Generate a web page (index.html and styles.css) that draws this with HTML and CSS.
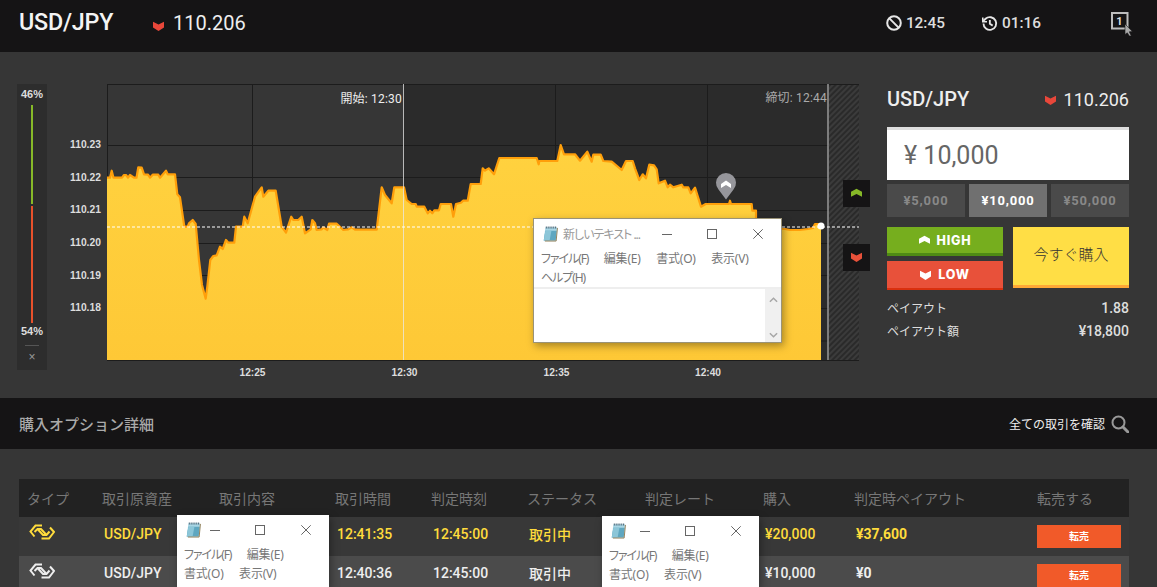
FILE: index.html
```html
<!DOCTYPE html>
<html lang="ja">
<head>
<meta charset="utf-8">
<title>USD/JPY</title>
<link rel="stylesheet" href="styles.css">
</head>
<body>
<svg class="defs" width="0" height="0" aria-hidden="true">
  <defs>
    <symbol id="chev-down" viewBox="0 0 11 10"><path d="M0 .8 L5.5 3.4 L11 .8 V6.6 L5.5 10 L0 6.6Z"/></symbol>
    <symbol id="chev-up" viewBox="0 0 13 10"><path d="M0 3.6 L6.5 0 L13 3.6 V9.4 L6.5 6.2 L0 9.4Z"/></symbol>
    <symbol id="swap" viewBox="0 0 26 16"><g fill="none" stroke-width="2" stroke-linejoin="miter"><path d="M13 1.5 H6.5 L1.5 7.5 L5.5 12.5"/><path d="M5.5 8 L8.5 5 H12 L17.5 11"/><path d="M12.5 14.5 H20 L25 8 L21 3.5"/><path d="M20.5 7.5 L17.5 11 H14 L8.5 5"/></g></symbol>
    <symbol id="notepad" viewBox="0 0 16 17">
      <path d="M2.5 1.5 H15 L13.5 15.5 H0.8Z" fill="#a9d6e5"/>
      <path d="M2.5 5 H14.6 L13.5 15.5 H0.8Z" fill="#5fa7c0"/>
      <path d="M2.5 5 H9 L7 15.5 H0.8Z" fill="#8cc6d8"/>
      <path d="M2 16 H14 L15.4 2" fill="none" stroke="#8c7b52" stroke-width="1"/>
      <path d="M3 1.5 H15" stroke="#39596b" stroke-width="2" stroke-dasharray="1 1" fill="none"/>
    </symbol>
    <symbol id="win-min" viewBox="0 0 10 10"><path d="M0 5.5 H10" stroke="#666" fill="none"/></symbol>
    <symbol id="win-max" viewBox="0 0 10 10"><rect x=".5" y=".5" width="9" height="9" stroke="#666" fill="none"/></symbol>
    <symbol id="win-close" viewBox="0 0 10 10"><path d="M.3 .3 L9.7 9.7 M9.7 .3 L.3 9.7" stroke="#666" fill="none"/></symbol>
    <pattern id="hatch" width="4" height="4" patternUnits="userSpaceOnUse" patternTransform="rotate(45)">
      <rect width="4" height="4" fill="#2a2a2a"/><rect width="2" height="4" fill="#3b3b3b"/>
    </pattern>
    <linearGradient id="area" x1="0" y1="0" x2="0" y2="1"><stop offset="0" stop-color="#ffd23f"/><stop offset="1" stop-color="#fec836"/></linearGradient>
  </defs>
</svg>

<header class="topbar">
  <div class="top-title">USD/JPY</div>
  <svg class="chev top-chev"><use href="#chev-down"/></svg>
  <div class="top-price">110.206</div>
  <div class="clock clock-first">
    <svg class="clock-icon" viewBox="0 0 16 16"><circle cx="8" cy="8" r="6.8"/><path d="M3.4 3.4 L12.6 12.6"/></svg>
    <span>12:45</span>
  </div>
  <div class="clock clock-second">
    <svg class="clock-icon" viewBox="0 0 24 24"><path d="M3.5 12a9 9 0 1 0 3-6.7L3 8.5"/><path d="M2.5 3.5v6h6" class="solid"/><path d="M12.5 7v5.5l4 2.5"/></svg>
    <span>01:16</span>
  </div>
  <svg class="multi" viewBox="0 0 24 26">
    <rect x="3" y="3" width="15.5" height="15.5"/>
    <text x="10.5" y="15" class="multi-num" text-anchor="middle">1</text>
    <path d="M16 14 L23.4 21.5 L20.3 21.8 L22.3 26 L20.3 26 L18.3 22.8 L16 24.5Z" class="multi-cursor"/>
  </svg>
</header>

<section class="main">
  <aside class="gauge">
    <div class="gauge-pct gauge-up">46%</div>
    <div class="gauge-bar gauge-green"></div>
    <div class="gauge-bar gauge-red"></div>
    <div class="gauge-pct gauge-down">54%</div>
    <div class="gauge-rule"></div>
    <div class="gauge-x">×</div>
  </aside>

  <svg class="chart" viewBox="47 84 840 300" width="840" height="300">
    <rect x="107" y="84" width="296" height="276" fill="#363636"/>
    <rect x="403" y="84" width="426" height="276" fill="#2b2b2b"/>
    <rect x="829" y="84" width="30" height="276" fill="url(#hatch)"/>
    <g class="grid">
      <path d="M107 84.5 H859 M107 145.5 H829 M107 177.5 H829 M107 210.5 H829 M107 243.5 H829 M107 275.5 H829 M107 308.5 H829 M107 341 H829 M107 360.5 H859"/>
      <path d="M107.5 84 V360 M252.5 84 V360 M555.5 84 V360 M707.5 84 V360"/>
    </g>
    <path fill="url(#area)" d="M107 360 V177.7 H110 L111.7 170.7 L113.5 177.7 H122 L124 175 H126 L128 177.7 L130 175 L134 177.7 H136.5 L138.3 167.3 L141.7 167.7 L144 174.3 L148 174.7 L150 177.7 L152.7 174.7 H158.3 L160 177.7 L166 170.7 L167.7 174.3 H175 L177.3 194.3 L180 197.3 L184.3 226.7 H187.7 L189 223.3 L192.7 220 L195.7 224 L199 260 L202 285 L205.7 298.7 L207.3 286.7 L210.3 260 L213.3 256 L216.7 255.3 L220 246.7 L222.7 249 L226 240 L228.3 242.7 H234.3 L236 226.7 H242.7 L244.3 216.7 L247.7 223.3 L255 196.7 L261.7 187.3 L263.3 196.7 L268.3 190.7 H275.7 L281.7 226.7 L286 232.7 L291.3 216.7 L293.3 220 H298.3 L301.7 216.7 L305 233.3 L310.7 229.3 L312.3 220 L315 223.3 L316.7 230 L321.7 229.3 L323.3 227.3 L327.3 230 L329 223.7 H336.7 L343.3 230 L348.3 229.3 L351.7 227.3 L355 229.7 H376.7 L381.7 187.3 L385 195 L391.7 203.3 L394.3 187.3 H404 L406.7 200 L411.7 204 H415.7 L416.7 206.7 H424.3 L427.7 213.3 L430 210.7 L432.3 213.3 L434.3 210.3 H439 L440.7 204 H451 L453.3 216.7 L456 204 L461 202.7 L463.3 200.7 H467.7 L470.7 184 H480.7 L482.7 168.3 L485 170.7 L488.7 168.3 L494 174.3 L499.3 158 H536.7 L538.7 164.3 L539.3 161 H557.3 L560.7 145 L564 154.3 H575 L580 160.7 L587.3 151.7 L591.7 161.7 L593.3 154.7 H600.7 L603.3 161 L611.7 161.7 L621.7 170 L626 161 H632.7 L635 168.3 L639.3 180 L642.7 174.3 L646 178.3 L649.3 164.7 L654 165.3 L656.7 169.3 L658.7 183.3 L665 180.7 L667.7 187.3 L670 184.7 L673.3 187.3 L681.7 184.7 L683.3 187.3 H688.3 L690.7 193.3 L695 187.7 L701 206.7 L705.7 204 H729 L730 200.7 L731 204 H751.7 L752.3 210.7 H756 V228 L785 229 L790 230 H800 L808 229 L813 228 L815 224 H818 L821 226 V360Z"/>
    <path class="area-line" d="M107 177.7 H110 L111.7 170.7 L113.5 177.7 H122 L124 175 H126 L128 177.7 L130 175 L134 177.7 H136.5 L138.3 167.3 L141.7 167.7 L144 174.3 L148 174.7 L150 177.7 L152.7 174.7 H158.3 L160 177.7 L166 170.7 L167.7 174.3 H175 L177.3 194.3 L180 197.3 L184.3 226.7 H187.7 L189 223.3 L192.7 220 L195.7 224 L199 260 L202 285 L205.7 298.7 L207.3 286.7 L210.3 260 L213.3 256 L216.7 255.3 L220 246.7 L222.7 249 L226 240 L228.3 242.7 H234.3 L236 226.7 H242.7 L244.3 216.7 L247.7 223.3 L255 196.7 L261.7 187.3 L263.3 196.7 L268.3 190.7 H275.7 L281.7 226.7 L286 232.7 L291.3 216.7 L293.3 220 H298.3 L301.7 216.7 L305 233.3 L310.7 229.3 L312.3 220 L315 223.3 L316.7 230 L321.7 229.3 L323.3 227.3 L327.3 230 L329 223.7 H336.7 L343.3 230 L348.3 229.3 L351.7 227.3 L355 229.7 H376.7 L381.7 187.3 L385 195 L391.7 203.3 L394.3 187.3 H404 L406.7 200 L411.7 204 H415.7 L416.7 206.7 H424.3 L427.7 213.3 L430 210.7 L432.3 213.3 L434.3 210.3 H439 L440.7 204 H451 L453.3 216.7 L456 204 L461 202.7 L463.3 200.7 H467.7 L470.7 184 H480.7 L482.7 168.3 L485 170.7 L488.7 168.3 L494 174.3 L499.3 158 H536.7 L538.7 164.3 L539.3 161 H557.3 L560.7 145 L564 154.3 H575 L580 160.7 L587.3 151.7 L591.7 161.7 L593.3 154.7 H600.7 L603.3 161 L611.7 161.7 L621.7 170 L626 161 H632.7 L635 168.3 L639.3 180 L642.7 174.3 L646 178.3 L649.3 164.7 L654 165.3 L656.7 169.3 L658.7 183.3 L665 180.7 L667.7 187.3 L670 184.7 L673.3 187.3 L681.7 184.7 L683.3 187.3 H688.3 L690.7 193.3 L695 187.7 L701 206.7 L705.7 204 H729 L730 200.7 L731 204 H751.7 L752.3 210.7 H756 V228 L785 229 L790 230 H800 L808 229 L813 228 L815 224 H818 L821 226"/>
    <path class="start-line" d="M403.5 84 V360"/>
    <path class="end-line" d="M828 84 V360"/>
    <path class="strike" d="M107 227 H859"/>
    <circle cx="821" cy="226" r="3.5" fill="#fff"/>
    <path d="M726 199.5 L718.5 189.5 A10 10 0 1 1 733.5 189.5Z" fill="#96969b"/>
    <path d="M721 184 L726 180.5 L731 184 V188 L726 185 L721 188Z" fill="#fff"/>
    <g class="ylabels">
      <text x="70" y="148">110.23</text>
      <text x="70" y="181">110.22</text>
      <text x="70" y="213">110.21</text>
      <text x="70" y="246">110.20</text>
      <text x="70" y="279">110.19</text>
      <text x="70" y="311">110.18</text>
    </g>
    <g class="xlabels">
      <text x="252.5" y="376">12:25</text>
      <text x="404.5" y="376">12:30</text>
      <text x="556.5" y="376">12:35</text>
      <text x="708" y="376">12:40</text>
    </g>
    <text class="mark mark-start" x="402" y="103">開始: 12:30</text>
    <text class="mark mark-end" x="827" y="102">締切: 12:44</text>
    <rect x="843" y="180" width="27" height="27" fill="#151415"/>
    <rect x="843" y="244" width="27" height="27" fill="#151415"/>
    <use href="#chev-up" x="851" y="188" width="11" height="10" fill="#86b928"/>
    <use href="#chev-down" x="851" y="252" width="11" height="10" fill="#e8513a"/>
  </svg>

  <aside class="panel">
    <div class="pair">
      <div class="pair-name">USD/JPY</div>
      <div class="pair-price"><svg class="chev pair-chev"><use href="#chev-down"/></svg>110.206</div>
    </div>
    <div class="amount">¥ 10,000</div>
    <div class="chips">
      <div class="chip">¥5,000</div>
      <div class="chip chip-on">¥10,000</div>
      <div class="chip">¥50,000</div>
    </div>
    <div class="actions">
      <div class="dirs">
        <div class="dir dir-high"><svg class="dir-icon"><use href="#chev-up"/></svg>HIGH</div>
        <div class="dir dir-low"><svg class="dir-icon"><use href="#chev-down"/></svg>LOW</div>
      </div>
      <div class="buy">今すぐ購入</div>
    </div>
    <div class="pay"><span>ペイアウト</span><b>1.88</b></div>
    <div class="pay"><span>ペイアウト額</span><b>¥18,800</b></div>
  </aside>
</section>

<section class="subbar">
  <h2 class="sub-title">購入オプション詳細</h2>
  <div class="sub-link">全ての取引を確認
    <svg class="search" viewBox="0 0 18 18"><circle cx="7.5" cy="7.5" r="6"/><path d="M12 12 L17 17" class="search-h"/></svg>
  </div>
</section>

<section class="tablewrap">
  <div class="row row-head">
    <div>タイプ</div><div>取引原資産</div><div>取引内容</div><div>取引時間</div><div>判定時刻</div><div>ステータス</div><div>判定レート</div><div>購入</div><div>判定時ペイアウト</div><div>転売する</div>
  </div>
  <div class="row row-live">
    <div><svg class="swap"><use href="#swap"/></svg></div><div class="cell-b">USD/JPY</div><div></div><div class="cell">12:41:35</div><div class="cell">12:45:00</div><div class="cell">取引中</div><div></div><div class="cell">¥20,000</div><div class="cell-b pay-cell">¥37,600</div><div class="cell-btn"><span class="resell">転売</span></div>
  </div>
  <div class="row row-alt">
    <div><svg class="swap"><use href="#swap"/></svg></div><div class="cell-b">USD/JPY</div><div></div><div class="cell">12:40:36</div><div class="cell">12:45:00</div><div class="cell">取引中</div><div></div><div class="cell">¥10,000</div><div class="cell-b pay-cell">¥0</div><div class="cell-btn"><span class="resell">転売</span></div>
  </div>
</section>

<div class="win win-main">
  <div class="win-bar">
    <svg class="win-icon"><use href="#notepad"/></svg>
    <span class="win-title">新しいテキスト ...</span>
    <svg class="wb wb-min"><use href="#win-min"/></svg>
    <svg class="wb wb-max"><use href="#win-max"/></svg>
    <svg class="wb wb-close"><use href="#win-close"/></svg>
  </div>
  <div class="win-menu"><span class="kana">ファイル(F)</span><span>編集(E)</span><span>書式(O)</span><span>表示(V)</span><span class="kana">ヘルプ(H)</span></div>
  <div class="win-body">
    <div class="win-scroll">
      <svg viewBox="0 0 10 6" class="scr"><path d="M1 5 L5 1 L9 5"/></svg>
      <svg viewBox="0 0 10 6" class="scr"><path d="M1 1 L5 5 L9 1"/></svg>
    </div>
  </div>
</div>

<div class="win win-a">
  <div class="win-bar">
    <svg class="win-icon"><use href="#notepad"/></svg>
    <svg class="wb wb-min"><use href="#win-min"/></svg>
    <svg class="wb wb-max"><use href="#win-max"/></svg>
    <svg class="wb wb-close"><use href="#win-close"/></svg>
  </div>
  <div class="win-menu"><span class="kana">ファイル(F)</span><span>編集(E)</span><span>書式(O)</span><span>表示(V)</span></div>
</div>

<div class="win win-b">
  <div class="win-bar">
    <svg class="win-icon"><use href="#notepad"/></svg>
    <svg class="wb wb-min"><use href="#win-min"/></svg>
    <svg class="wb wb-max"><use href="#win-max"/></svg>
    <svg class="wb wb-close"><use href="#win-close"/></svg>
  </div>
  <div class="win-menu"><span class="kana">ファイル(F)</span><span>編集(E)</span><span>書式(O)</span><span>表示(V)</span></div>
</div>
</body>
</html>
```
FILE: styles.css
```css
* { box-sizing: border-box; }
html, body { margin: 0; padding: 0; height: 587px; overflow: hidden; }
body {
  position: relative;
  background: #363636;
  color: #eee;
  font-family: Roboto, "Noto Sans CJK JP", sans-serif;
}
.defs { position: absolute; }

/* top bar */
.topbar {
  height: 52px;
  background: #151415;
  display: flex;
  align-items: center;
  padding: 0 27px 6px 19px;
}
.top-title { font-size: 23.3px; font-weight: 500; width: 134px; color: #f4f4f4; line-height: 1; letter-spacing: -.2px; }
.chev { fill: #e8473a; }
.top-chev { width: 11px; height: 10px; margin-top: 5px; }
.top-price { font-size: 20px; margin-left: 9px; color: #eee; }
.clock { display: flex; align-items: center; gap: 4px; font-size: 15.4px; font-weight: 500; color: #ddd; }
.clock-first { margin-left: auto; }
.clock-second { margin-left: 36px; }
.clock-icon { width: 16px; height: 16px; fill: none; stroke: #e6e6e6; stroke-width: 2; }
.clock-second .clock-icon { width: 17px; height: 17px; stroke-width: 2.6; }
.clock-icon .solid { stroke-width: 2.2; }
.multi { width: 24px; height: 26px; margin: 0 -3px 0 68px; overflow: visible; }
.multi rect { fill: none; stroke: #bdbdbd; stroke-width: 2; }
.multi-num { font: 700 11px Roboto, sans-serif; fill: #ddd; }
.multi-cursor { fill: #aaa; stroke: #151415; stroke-width: .6; }

/* main */
.main { height: 346px; display: flex; padding: 32px 0 0 17px; align-items: flex-start; }
.gauge {
  width: 30px; height: 286px;
  background: #2d2d2d;
  display: flex; flex-direction: column; align-items: center;
}
.gauge-pct { font: 700 11px/12px "Liberation Sans", sans-serif; color: #ddd; }
.gauge-up { margin-top: 4px; margin-bottom: 5px; }
.gauge-down { margin-top: 2px; }
.gauge-bar { width: 2px; }
.gauge-green { height: 99px; background: #86b928; margin-bottom: 2px; }
.gauge-red { height: 117px; background: #e8512b; }
.gauge-rule { width: 14px; height: 1px; background: #555; margin-top: 8px; }
.gauge-x { font: 12px/14px "Liberation Sans", sans-serif; color: #999; margin-top: 4px; }

.chart { display: block; flex: none; }
.grid path { stroke: #1c1c1c; stroke-width: 1; fill: none; }
.area-line { fill: none; stroke: #ff9f0a; stroke-width: 2.2; stroke-linejoin: round; }
.start-line { stroke: #e8e8e8; stroke-opacity: .75; stroke-width: 1; }
.end-line { stroke: #b5b5b5; stroke-width: 1.2; }
.strike { stroke: #fff; stroke-width: 1.2; stroke-dasharray: 3 2; fill: none; }
.ylabels text { font: 700 10.3px "Liberation Sans", sans-serif; fill: #ddd; }
.xlabels text { font: 700 10.2px "Liberation Sans", sans-serif; fill: #ddd; text-anchor: middle; }
.mark { font: 12px Roboto, "Noto Sans CJK JP", sans-serif; letter-spacing: .2px; text-anchor: end; }
.mark-start { fill: #eee; }
.mark-end { fill: #aaa; }

/* right panel */
.panel { width: 242px; flex: none; }
.pair { height: 30px; display: flex; justify-content: space-between; align-items: center; }
.pair-name { font-size: 20px; font-weight: 500; color: #eee; }
.pair-price { font-size: 18px; display: flex; align-items: center; color: #eee; }
.pair-chev { width: 11px; height: 10px; margin-right: 8px; margin-top: 2px; }
.amount {
  margin-top: 13px; height: 53px;
  background: #fff; border-top: 3px solid #dedede;
  padding-left: 17px; font-size: 25px; line-height: 52px; color: #666;
}
.chips { margin-top: 4px; display: grid; grid-template-columns: repeat(3, 78px); column-gap: 4px; }
.chip {
  height: 33px; background: #4a4a4a; color: #888;
  font: 700 13px/33px Roboto, sans-serif; letter-spacing: .8px; text-align: center;
}
.chip-on { background: #707070; color: #fff; }
.actions { margin-top: 10px; display: flex; gap: 10px; }
.dirs { width: 116px; display: flex; flex-direction: column; gap: 5px; }
.dir {
  height: 29px; display: flex; align-items: center; justify-content: center; gap: 7px;
  color: #fff; font: 800 12.5px Inter, sans-serif; letter-spacing: .8px;
}
.dir-high { background: #76ae1e; border-bottom: 3px solid #4f8a14; }
.dir-low { background: #e8513a; border-bottom: 2px solid #d9300f; }
.dir-icon { width: 11px; height: 10px; fill: #fff; }
.buy {
  width: 116px; height: 61px; background: #ffde45; border-bottom: 3px solid #ffa836;
  color: #333; font-size: 15px; font-weight: 300; padding-bottom: 5px;
  display: flex; align-items: center; justify-content: center;
}
.pay { display: flex; justify-content: space-between; align-items: center; height: 23px; font-size: 12px; color: #ddd; }
.pay b { font-weight: 500; font-size: 14px; }
.actions + .pay { margin-top: 6px; }

/* sub bar */
.subbar {
  height: 51px; background: #151415;
  display: flex; align-items: center; justify-content: space-between;
  padding: 0 28px 0 19px;
}
.sub-title { margin: 0; font-size: 15px; font-weight: 500; color: #aaa; }
.sub-link { display: flex; align-items: center; gap: 6px; font-size: 12px; color: #eee; }
.search { width: 18px; height: 18px; fill: none; stroke: #999; stroke-width: 2; }
.search-h { stroke-width: 3; stroke-linecap: round; }

/* table */
.tablewrap { padding: 30px 28px 0 19px; }
.row {
  display: grid;
  grid-template-columns: 83px 117px 116px 96px 96px 118px 118px 91px 183px 92px;
  align-items: center;
  height: 39px;
  font-size: 14px;
}
.row-head { height: 38px; background: #222; color: #777; }
.row-head > div:first-child { padding-left: 8px; }
.row-live { background: #383838; color: #ffdc3c; padding-bottom: 5px; }
.row-alt { background: #4b4b4b; color: #eee; padding-bottom: 5px; }
.row-live > div, .row-alt > div { padding-left: 2px; }
.row-live > div:first-child, .row-alt > div:first-child { padding-left: 10px; display: flex; }
.cell { font-weight: 500; }
.cell-b { font-weight: 500; font-size: 14px; }
.pay-cell { font-weight: 700; }
.swap { width: 26px; height: 16px; margin-top: -4px; }
.row-live .swap { stroke: #ffdc3c; }
.row-alt .swap { stroke: #eee; }
.row-live > .cell-btn, .row-alt > .cell-btn { padding: 8px 0 0; align-self: start; }
.resell {
  display: block; width: 84px; height: 23px;
  background: #f15a29; color: #fff; font-size: 10px; font-weight: 700;
  text-align: center; line-height: 23px;
}

/* notepad windows */
.win {
  position: absolute; background: #fff; color: #777;
  font-family: "Noto Sans", "Noto Sans CJK JP", sans-serif;
  font-feature-settings: "palt";
  font-size: 12px;
  box-shadow: 2px 3px 8px rgba(0, 0, 0, .35);
}
.win-main { left: 533px; top: 218px; width: 249px; height: 125px; border: 1px solid #9a9378; display: flex; flex-direction: column; }
.win-a { left: 177px; top: 515px; width: 152px; height: 72px; padding: 0 0 0 7px; }
.win-b { left: 602px; top: 516px; width: 157px; height: 71px; padding: 0 0 0 7px; }
.win-bar { display: flex; align-items: center; height: 29px; }
.win-main .win-bar { padding-left: 9px; }
.win-a .win-bar, .win-b .win-bar { padding-left: 2px; height: 26px; margin-top: 2px; }
.win-icon { width: 15px; height: 16px; flex: none; }
.win-title { margin-left: 5px; color: #999; font-size: 12px; letter-spacing: -1px; white-space: nowrap; }
.wb { width: 10px; height: 10px; flex: none; }
.win-main .wb-min { margin-left: auto; margin-right: 35px; }
.win-main .wb-max { margin-right: 36px; }
.win-main .wb-close { margin-right: 18px; }
.win-a .wb-min { margin-left: 9px; margin-right: 35px; }
.win-a .wb-max { margin-right: 36px; }
.win-b .wb-min { margin-left: 14px; margin-right: 35px; }
.win-b .wb-max { margin-right: 36px; }
.win-menu { display: flex; flex-wrap: wrap; line-height: 19px; column-gap: 15.5px; letter-spacing: -.2px; color: #777; }
.kana { letter-spacing: -1.1px; }
.win-main .win-menu { height: 39px; padding: 1px 0 0 7px; }
.win-a .win-menu { padding-top: 1px; margin-top: 1px; width: 140px; }
.win-b .win-menu { padding-top: 1px; margin-top: 1px; width: 145px; }
.win-body { flex: 1; border-top: 2px solid #eee; display: flex; justify-content: flex-end; }
.win-scroll { width: 16px; background: #f0f0f0; display: flex; flex-direction: column; justify-content: space-between; align-items: center; padding: 8px 0 4px; }
.scr { width: 9px; height: 6px; fill: none; stroke: #a6a6a6; stroke-width: 1.6; }
```
